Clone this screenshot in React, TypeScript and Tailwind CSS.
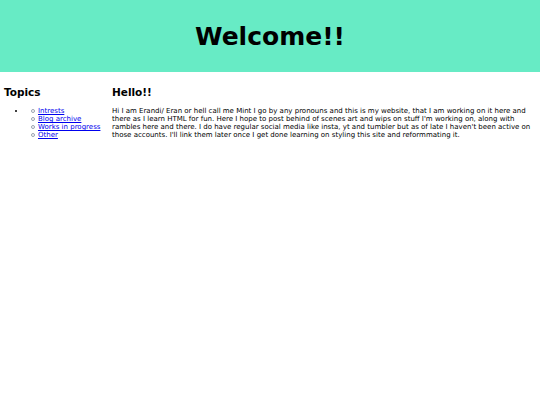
const TOPICS = ['Intrests', 'Blog archive', 'Works in progress', 'Other']

export default function App() {
  return (
    <div className="min-h-screen bg-white text-black font-['DejaVu_Sans',Verdana,sans-serif]">
      {/* Banner */}
      <header className="h-[72px] bg-[#67ebc5] flex items-center justify-center">
        <h1 className="text-[25px] font-bold leading-none">Welcome!!</h1>
      </header>

      <div className="flex pr-2">
        {/* Side nav */}
        <aside className="w-[108px] shrink-0 pl-1 pt-[14px]">
          <h2 className="text-[10.5px] font-bold leading-3">Topics</h2>
          <ul className="list-disc pl-[22px] mt-[9px] text-[7px] leading-[8px]">
            <li>
              <ul className="pl-[5px]">
                {TOPICS.map(t => (
                  <li key={t} className="flex items-center gap-[3px]">
                    <span className="w-[4px] h-[4px] rounded-full border border-gray-400 shrink-0" />
                    <a href="#" className="text-[#0000ee] underline">{t}</a>
                  </li>
                ))}
              </ul>
            </li>
          </ul>
        </aside>

        {/* Intro */}
        <main className="flex-1 pl-1 pt-[14px]">
          <h2 className="text-[10.5px] font-bold leading-3">Hello!!</h2>
          <p className="mt-[9px] text-[7px] leading-[8px]">
            Hi I am Erandi/ Eran or hell call me Mint I go by any pronouns and this is my website, that I am working on it here and there as I learn HTML for fun. Here I hope to post behind of scenes art and wips on stuff I'm working on, along with rambles here and there. I do have regular social media like insta, yt and tumbler but as of late I haven't been active on those accounts. I'll link them later once I get done learning on styling this site and reformmating it.
          </p>
        </main>
      </div>
    </div>
  )
}
